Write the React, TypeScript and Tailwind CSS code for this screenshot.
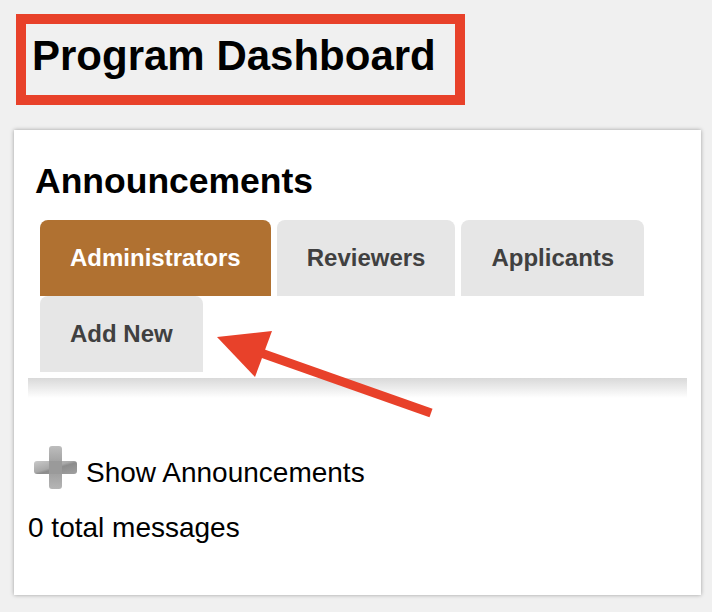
import React from "react";

const font = { fontFamily: '"Liberation Sans", Arial, Helvetica, sans-serif' };

function PlusIcon() {
  return (
    <svg width="43" height="43" viewBox="0 0 43 43">
      <defs>
        <linearGradient id="pg" x1="0" y1="0" x2="1" y2="1">
          <stop offset="0" stopColor="#c9c9c9" />
          <stop offset="0.45" stopColor="#a8a8a8" />
          <stop offset="0.55" stopColor="#8c8c8c" />
          <stop offset="1" stopColor="#a0a0a0" />
        </linearGradient>
        <linearGradient id="pv" x1="0" y1="0" x2="0" y2="1">
          <stop offset="0" stopColor="#bdbdbd" />
          <stop offset="0.5" stopColor="#999" />
          <stop offset="1" stopColor="#b5b5b5" />
        </linearGradient>
      </defs>
      <rect x="15" y="0" width="13" height="43" rx="3" fill="url(#pv)" />
      <rect x="0" y="15" width="43" height="13" rx="3" fill="url(#pg)" />
      <rect x="15" y="15" width="13" height="13" fill="#9a9a9a" />
    </svg>
  );
}

function Tab({ label, active }: { label: string; active?: boolean }) {
  return (
    <div
      className={
        "h-[76px] flex items-center px-[30px] rounded-t-[8px] text-[24px] font-bold " +
        (active ? "bg-[#b07131] text-white" : "bg-[#e6e6e6] text-[#404040]")
      }
    >
      {label}
    </div>
  );
}

export default function App() {
  return (
    <div className="relative w-[712px] h-[612px] bg-[#f0f0f0] overflow-hidden" style={font}>
      <div className="pt-[14px] pl-[16px]">
        <div className="inline-block border-[10px] border-[#e8412a]">
          <h1 className="text-[42px] font-bold leading-[48px] text-black pt-[8px] pb-[15px] pl-[6px] pr-[19px]">
            Program Dashboard
          </h1>
        </div>
      </div>

      <div className="mt-[25px] ml-[14px] w-[687px] bg-white shadow-[0_0_4px_rgba(0,0,0,0.35)] pt-[31px] pl-[14px] pr-[14px] pb-[51px]">
        <h2 className="ml-[7px] text-[35.5px] font-bold leading-[40px] text-black">Announcements</h2>
        <div className="ml-[12px] mt-[19px] flex flex-wrap gap-x-[6px]">
          <Tab label="Administrators" active />
          <Tab label="Reviewers" />
          <Tab label="Applicants" />
          <Tab label="Add New" />
        </div>
        <div className="mt-[6px] h-[20px] bg-gradient-to-b from-[#d9d9d9] to-white" />
        <div className="mt-[48px] flex items-end">
          <div className="ml-[6px]">
            <PlusIcon />
          </div>
          <span className="ml-[9px] text-[28px] leading-[32px] text-black">Show Announcements</span>
        </div>
        <div className="mt-[23px] text-[28px] leading-[32px] text-black">0 total messages</div>
      </div>

      <svg className="absolute left-0 top-0 pointer-events-none" width="712" height="612" viewBox="0 0 712 612">
        <line x1="431" y1="413" x2="250" y2="349" stroke="#e8412a" strokeWidth="9" />
        <polygon points="217,337 272,331 255,377" fill="#e8412a" />
      </svg>
    </div>
  );
}
